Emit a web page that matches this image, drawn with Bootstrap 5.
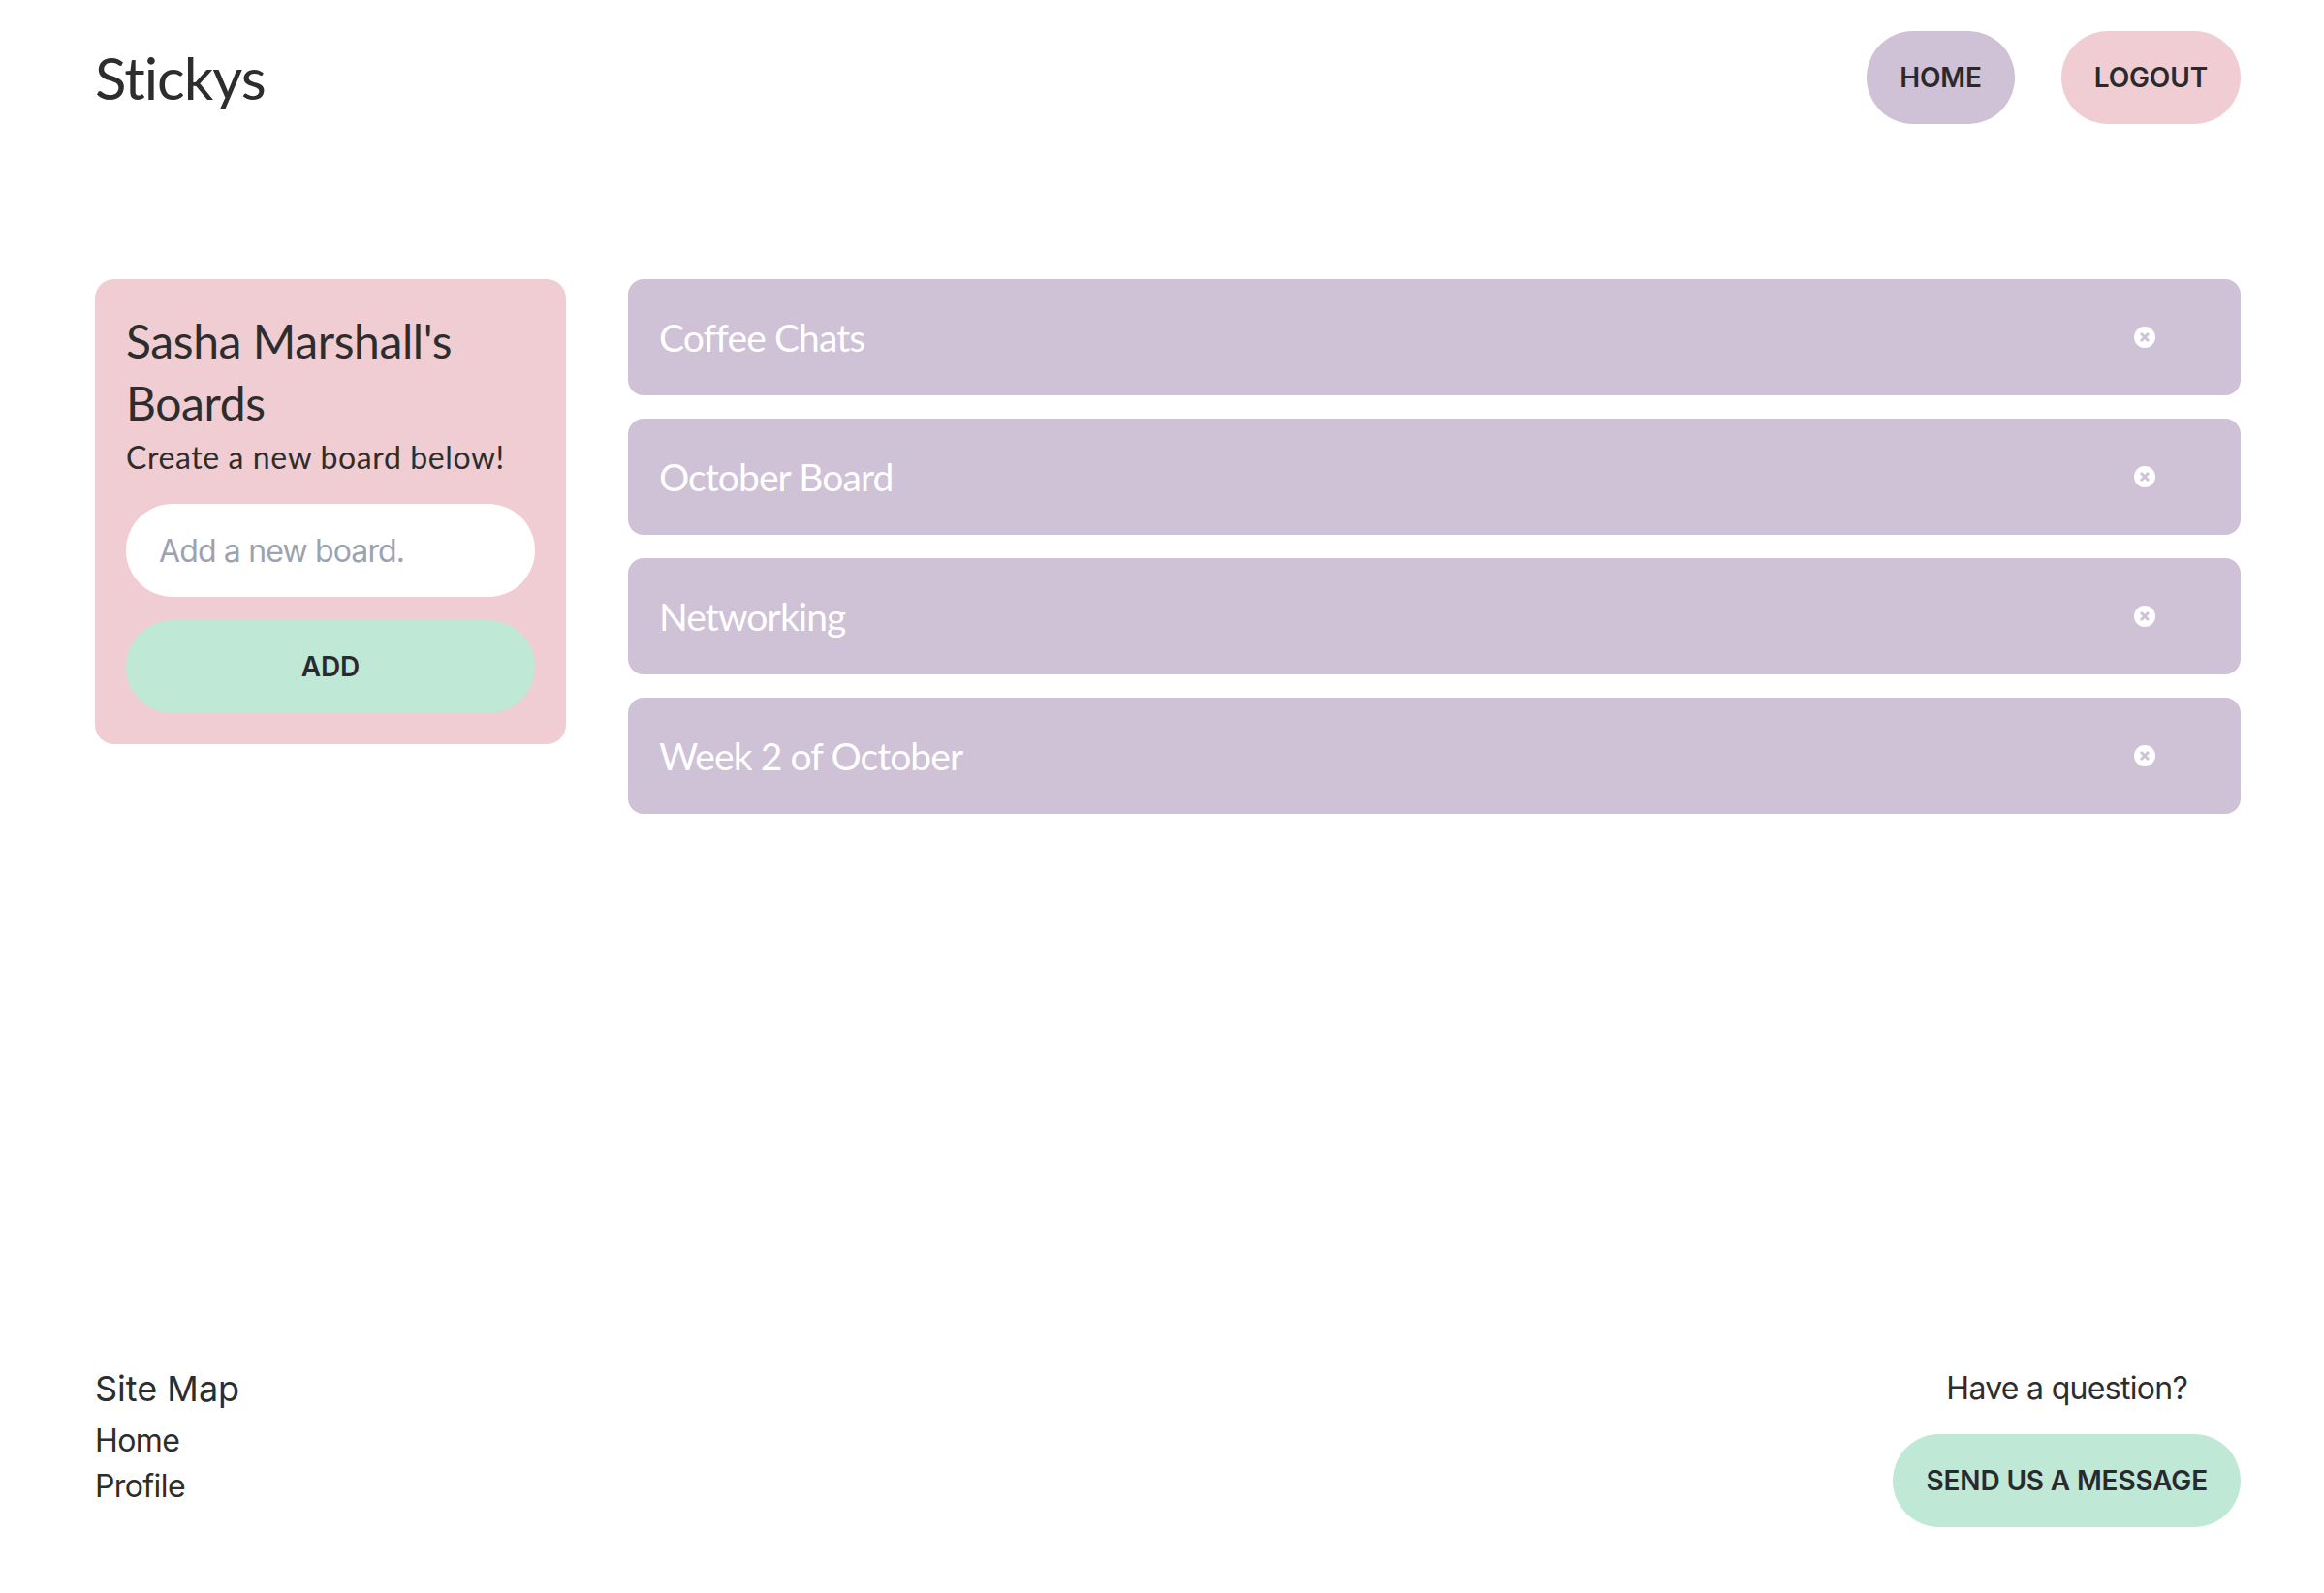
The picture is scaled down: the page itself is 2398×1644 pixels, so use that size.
<!DOCTYPE html>
<html lang="en">
<head>
<meta charset="utf-8">
<title>Stickys</title>
<link href="https://cdn.jsdelivr.net/npm/bootstrap@5.3.0/dist/css/bootstrap.min.css" rel="stylesheet">
<style>
html,body{height:100%;}
body{background:#fff;color:#2d2d2d;font-family:"Inter","Liberation Sans",sans-serif;}
.shell{min-height:1644px;padding:32px 86px 68px 98px;}
.brand-title{font-family:"Lato","Noto Sans",sans-serif;font-size:60px;line-height:96px;margin:0;font-weight:400;letter-spacing:-1px;}
.pill{height:96px;border-radius:48px;border:0;padding:0 34px;font-family:"Inter",sans-serif;font-weight:600;font-size:28px;letter-spacing:-.15px;color:#2a2a2e;text-transform:uppercase;}
.pill:hover{color:#2a2a2e;}
.c-lav{background:#cfc1d6;}
.c-pink{background:#f0cdd2;}
.c-mint{background:#c0e8d7;}
.top-nav{gap:48px;}
.content{margin-top:160px;gap:64px;}
.side-panel{width:486px;height:480px;flex:none;padding:32px;border-radius:20px;}
.side-head{font-family:"Lato","Noto Sans",sans-serif;font-size:48px;line-height:64px;font-weight:400;letter-spacing:-.4px;margin:0;}
.side-sub{font-family:"Lato","Noto Sans",sans-serif;font-size:32px;line-height:48px;letter-spacing:.6px;margin:0 0 24px;}
.board-input{height:96px;border:0;border-radius:48px;padding:0 34px;font-size:32px;letter-spacing:-.85px;font-family:"Inter",sans-serif;background:#fff;box-shadow:none;}
.board-input::placeholder{color:#9ca3af;opacity:1;}
.add-btn{width:100%;margin-top:24px;}
.board-list{gap:24px;}
.board-row{height:120px;border-radius:16px;padding:0 88px 0 32px;color:#fff;}
.board-name{font-family:"Lato","Noto Sans",sans-serif;font-size:39px;letter-spacing:-.9px;}
.x-icon{width:22px;height:22px;display:block;}
.foot{margin-top:auto;}
.foot-map{padding-top:1px;}
.foot-title{font-size:36px;line-height:48px;margin-bottom:6px;}
.foot-link{display:block;font-size:32px;line-height:47px;letter-spacing:-.6px;color:#2d2d2d;text-decoration:none;}
.ask{font-size:32px;line-height:50px;letter-spacing:-.7px;margin-bottom:22px;text-align:center;}
</style>
</head>
<body>
<div class="shell d-flex flex-column">
  <header class="d-flex justify-content-between align-items-center">
    <h1 class="brand-title">Stickys</h1>
    <nav class="d-flex top-nav">
      <a href="#" class="btn pill c-lav d-flex align-items-center">Home</a>
      <a href="#" class="btn pill c-pink d-flex align-items-center">Logout</a>
    </nav>
  </header>
  <main class="d-flex align-items-start content">
    <section class="side-panel c-pink">
      <h2 class="side-head">Sasha Marshall's Boards</h2>
      <p class="side-sub">Create a new board below!</p>
      <input class="form-control board-input" type="text" placeholder="Add a new board.">
      <button class="btn pill c-mint add-btn" type="button">Add</button>
    </section>
    <section class="d-flex flex-column flex-grow-1 board-list">
      <div class="board-row c-lav d-flex justify-content-between align-items-center"><span class="board-name">Coffee Chats</span><svg class="x-icon" viewBox="0 0 22 22"><circle cx="11" cy="11" r="11" fill="#fff"/><path d="M7 7l8 8M15 7l-8 8" stroke="#cfc1d6" stroke-width="3" fill="none"/></svg></div>
      <div class="board-row c-lav d-flex justify-content-between align-items-center"><span class="board-name">October Board</span><svg class="x-icon" viewBox="0 0 22 22"><circle cx="11" cy="11" r="11" fill="#fff"/><path d="M7 7l8 8M15 7l-8 8" stroke="#cfc1d6" stroke-width="3" fill="none"/></svg></div>
      <div class="board-row c-lav d-flex justify-content-between align-items-center"><span class="board-name">Networking</span><svg class="x-icon" viewBox="0 0 22 22"><circle cx="11" cy="11" r="11" fill="#fff"/><path d="M7 7l8 8M15 7l-8 8" stroke="#cfc1d6" stroke-width="3" fill="none"/></svg></div>
      <div class="board-row c-lav d-flex justify-content-between align-items-center"><span class="board-name">Week 2 of October</span><svg class="x-icon" viewBox="0 0 22 22"><circle cx="11" cy="11" r="11" fill="#fff"/><path d="M7 7l8 8M15 7l-8 8" stroke="#cfc1d6" stroke-width="3" fill="none"/></svg></div>
    </section>
  </main>
  <footer class="foot d-flex justify-content-between align-items-start">
    <div class="foot-map">
      <div class="foot-title">Site Map</div>
      <a href="#" class="foot-link">Home</a>
      <a href="#" class="foot-link">Profile</a>
    </div>
    <div class="d-flex flex-column">
      <div class="ask">Have a question?</div>
      <a href="#" class="btn pill c-mint d-flex align-items-center">Send us a message</a>
    </div>
  </footer>
</div>
<script src="https://cdn.jsdelivr.net/npm/bootstrap@5.3.0/dist/js/bootstrap.bundle.min.js"></script>
</body>
</html>
